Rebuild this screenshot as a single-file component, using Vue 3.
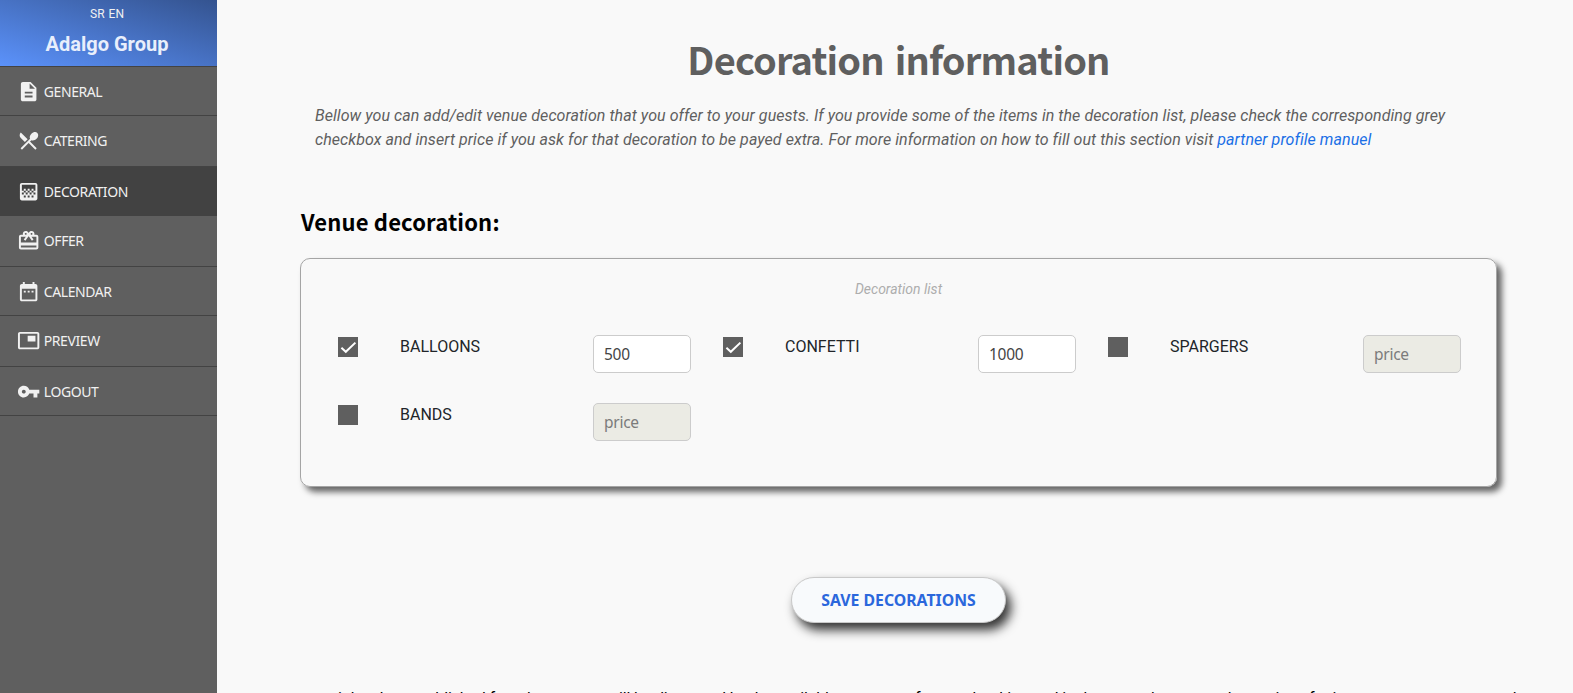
<script setup>
import { ref } from 'vue'

const menu = [
  { name: 'GENERAL', d: 'M14 2H6c-1.1 0-1.99.9-1.99 2L4 20c0 1.1.89 2 1.99 2H18c1.1 0 2-.9 2-2V8l-6-6zm2 16H8v-2h8v2zm0-4H8v-2h8v2zm-3-5V3.5L18.5 9H13z' },
  { name: 'CATERING', d: 'M8.1 13.34l2.83-2.83L3.91 3.5c-1.56 1.56-1.56 4.09 0 5.66l4.19 4.18zm6.78-1.81c1.53.71 3.68.21 5.27-1.38 1.91-1.91 2.28-4.65.81-6.12-1.46-1.46-4.2-1.1-6.12.81-1.59 1.59-2.09 3.74-1.38 5.27L3.7 19.87l1.41 1.41L12 14.41l6.88 6.88 1.41-1.41L13.41 13l1.47-1.47z' },
  { name: 'DECORATION', active: true, d: 'M11 9h2v2h-2zm-2 2h2v2H9zm4 0h2v2h-2zm2-2h2v2h-2zM7 9h2v2H7zm12-6H5c-1.1 0-2 .9-2 2v14c0 1.1.9 2 2 2h14c1.1 0 2-.9 2-2V5c0-1.1-.9-2-2-2zM9 18H7v-2h2v2zm4 0h-2v-2h2v2zm4 0h-2v-2h2v2zm2-7h-2v2h2v2h-2v-2h-2v2h-2v-2h-2v2H9v-2H7v2H5v-2h2v-2H5V5h14v6z' },
  { name: 'OFFER', d: 'M20 6h-2.18c.11-.31.18-.65.18-1 0-1.66-1.34-3-3-3-1.05 0-1.96.54-2.5 1.35l-.5.67-.5-.68C10.96 2.54 10.05 2 9 2 7.34 2 6 3.34 6 5c0 .35.07.69.18 1H4c-1.11 0-1.99.89-1.99 2L2 19c0 1.11.89 2 2 2h16c1.11 0 2-.89 2-2V8c0-1.11-.89-2-2-2zm-5-2c.55 0 1 .45 1 1s-.45 1-1 1-1-.45-1-1 .45-1 1-1zM9 4c.55 0 1 .45 1 1s-.45 1-1 1-1-.45-1-1 .45-1 1-1zm11 15H4v-2h16v2zm0-5H4V8h5.08L7 10.83 8.62 12 11 8.76l1-1.36 1 1.36L15.38 12 17 10.83 14.92 8H20v6z' },
  { name: 'CALENDAR', d: 'M9 11H7v2h2v-2zm4 0h-2v2h2v-2zm4 0h-2v2h2v-2zm2-7h-1V2h-2v2H8V2H6v2H5c-1.11 0-1.99.9-1.99 2L3 20c0 1.1.89 2 2 2h14c1.1 0 2-.9 2-2V6c0-1.1-.9-2-2-2zm0 16H5V9h14v11z' },
  { name: 'PREVIEW', d: 'M19 7h-8v6h8V7zm2-4H3c-1.1 0-2 .9-2 2v14c0 1.1.9 1.98 2 1.98h18c1.1 0 2-.88 2-1.98V5c0-1.1-.9-2-2-2zm0 16.01H3V4.98h18v14.03z' },
  { name: 'LOGOUT', d: 'M12.65 10C11.83 7.67 9.61 6 7 6c-3.31 0-6 2.69-6 6s2.69 6 6 6c2.61 0 4.83-1.67 5.65-4H17v4h4v-4h2v-4H12.65zM7 14c-1.1 0-2-.9-2-2s.9-2 2-2 2 .9 2 2-.9 2-2 2z' },
]

const items = ref([
  { name: 'BALLOONS', on: true, price: '500' },
  { name: 'CONFETTI', on: true, price: '1000' },
  { name: 'SPARGERS', on: false, price: '' },
  { name: 'BANDS', on: false, price: '' },
])
</script>

<template>
  <div class="page">
    <aside class="sidebar">
      <header class="brand">
        <div class="langs"><span>SR</span> <span>EN</span></div>
        <div class="company">Adalgo Group</div>
      </header>
      <nav class="menu">
        <a v-for="m in menu" :key="m.name" class="entry" :class="{ active: m.active }">
          <svg class="icon" viewBox="0 0 24 24"><path :d="m.d" /></svg>
          <span>{{ m.name }}</span>
        </a>
      </nav>
    </aside>

    <main class="main">
      <h1 class="title">Decoration information</h1>
      <p class="intro">
        Bellow you can add/edit venue decoration that you offer to your guests. If you provide some of the items in the decoration list, please check the corresponding grey<br />
        checkbox and insert price if you ask for that decoration to be payed extra. For more information on how to fill out this section visit <a class="link">partner profile manuel</a>
      </p>
      <h2 class="subtitle">Venue decoration:</h2>

      <section class="card">
        <div class="caption">Decoration list</div>
        <div class="grid">
          <div v-for="i in items" :key="i.name" class="cell">
            <span class="box">
              <svg v-if="i.on" viewBox="0 0 20 20"><path d="M3.4 10.8 7.8 14.8 17.4 5.6" /></svg>
            </span>
            <span class="label">{{ i.name }}</span>
            <input v-model="i.price" class="price" placeholder="price" :disabled="!i.on" />
          </div>
        </div>
      </section>

      <button class="save"><span>SAVE DECORATIONS</span></button>

      <p class="note">
        once it has been published for other guests, will be discussed by the available managers for your booking and in the event that venue decorations for its own ceremony are made
      </p>
    </main>
  </div>
</template>

<style>
html, body { margin: 0; overflow: hidden; }
</style>

<style scoped>
* { box-sizing: border-box; }
.page {
  display: flex;
  height: 693px;
  overflow: hidden;
  background: #f9f9f9;
  font-family: Roboto, sans-serif;
}
.sidebar { width: 217px; flex: none; background: #5f5f5f; color: #f1f1f1; }
.brand {
  height: 66px;
  text-align: center;
  background: linear-gradient(to top right, #5b92fb, #34538f);
}
.langs { font-size: 12px; line-height: 14px; padding-top: 7px; padding-right: 3px; word-spacing: 1px; }
.company {
  font-size: 20px;
  font-weight: 700;
  line-height: 24px;
  padding-top: 11px;
  padding-right: 3px;
  color: #e9effc;
}
.menu {
  display: grid;
  grid-template-rows: 49px 51px 49px 51px 49px 51px 49px;
  border-top: 1px solid #434343;
}
.entry {
  display: flex;
  align-items: center;
  padding-left: 16.6px;
  border-bottom: 1px solid #434343;
  font: 14px "Noto Sans", sans-serif;
  letter-spacing: -0.42px;
}
.entry.active { background: #424242; border-color: #424242; }
.entry:nth-child(even) { padding-bottom: 1px; }
.icon { width: 23.3px; height: 23.3px; margin: 1px 3.9px 0 0; fill: #f1f1f1; }

.main { flex: 1; min-width: 0; padding: 0 76px 0 83px; }
.title {
  margin: 0;
  padding-top: 31px;
  height: 104px;
  text-align: center;
  font: 700 38px/56px "Noto Sans CJK SC", sans-serif;
  letter-spacing: -0.82px;
  word-spacing: 3px;
  color: #5f5f5f;
}
.intro {
  margin: 0;
  padding-left: 15px;
  height: 92px;
  font-size: 16px;
  font-style: italic;
  line-height: 24px;
  letter-spacing: 0.058px;
  color: #5f5f5f;
  white-space: nowrap;
}
.link { color: #1a6fe6; }
.subtitle {
  margin: 0;
  height: 62px;
  padding-left: 1px;
  font: 700 22px/50px "Noto Sans CJK SC", sans-serif;
  letter-spacing: 0.16px;
  color: #000;
}
.card {
  height: 229px;
  border: 1px solid #a5a5a5;
  border-radius: 10px;
  padding: 0 20px;
  box-shadow: 5px 5px 6px #666;
}
.caption {
  padding-top: 20px;
  height: 76px;
  text-align: center;
  font-size: 14px;
  font-style: italic;
  line-height: 21px;
  color: #adadad;
}
.grid { display: grid; grid-template-columns: repeat(3, 385px); grid-auto-rows: 68px; }
.cell { display: flex; align-items: flex-start; padding-left: 17px; }
.box { width: 20px; height: 20px; margin: 2px 42px 0 0; background: #5f5f5f; }
.box svg { display: block; width: 20px; height: 20px; fill: none; stroke: #fff; stroke-width: 2; }
.label { width: 193px; font-size: 16px; line-height: 24px; color: #212529; }
.price {
  width: 98px;
  height: 38px;
  margin: 0;
  padding: 0 10px;
  border: 1px solid #ccc;
  border-radius: 5px;
  background: #fff;
  color: #444;
  font: 15.5px "Noto Sans", sans-serif;
  letter-spacing: -0.25px;
}
.price:disabled { background: #ebebe4; }
.price::placeholder { color: #7b7b7b; opacity: 1; }
.save {
  display: block;
  width: 215px;
  height: 46px;
  margin: 90px auto 0;
  padding: 0;
  border: 1px solid #c9c9c9;
  border-radius: 23px;
  background: #f8fafc;
  box-shadow: 5px 7px 11px #333;
  color: #2b67dc;
  font: 700 15.8px "Noto Sans", sans-serif;
}
.note {
  margin: 0;
  padding-top: 64px;
  font-size: 16px;
  line-height: 24px;
  letter-spacing: -0.15px;
  text-align: center;
  white-space: nowrap;
  color: #000;
}
</style>
